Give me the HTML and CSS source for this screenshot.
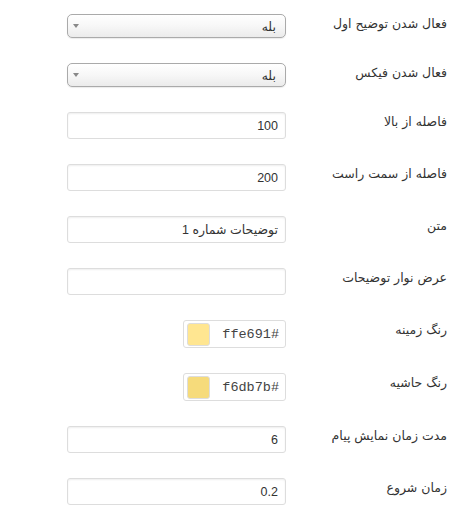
FILE: index.html
```html
<!DOCTYPE html>
<html lang="fa" dir="rtl">
<head>
    <meta charset="UTF-8">
    <meta name="viewport" content="width=device-width, initial-scale=1.0">
    <title>تنظیمات</title>
    <link rel="stylesheet" href="styles.css">
</head>
<body>
    <div class="form-table">
        <div class="row row-select">
            <label class="label">فعال شدن توضیح اول</label>
            <div class="select"><span>بله</span><i class="arrow"></i></div>
        </div>
        <div class="row row-select">
            <label class="label">فعال شدن فیکس</label>
            <div class="select"><span>بله</span><i class="arrow"></i></div>
        </div>
        <div class="row">
            <label class="label">فاصله از بالا</label>
            <input type="text" class="field" value="100">
        </div>
        <div class="row">
            <label class="label">فاصله از سمت راست</label>
            <input type="text" class="field" value="200">
        </div>
        <div class="row">
            <label class="label">متن</label>
            <input type="text" class="field" value="توضیحات شماره 1">
        </div>
        <div class="row">
            <label class="label">عرض نوار توضیحات</label>
            <input type="text" class="field" value="">
        </div>
        <div class="row row-color">
            <label class="label">رنگ زمینه</label>
            <div class="color">
                <span class="hex">#ffe691</span>
                <span class="swatch swatch-bg"></span>
            </div>
        </div>
        <div class="row row-color">
            <label class="label">رنگ حاشیه</label>
            <div class="color">
                <span class="hex">#f6db7b</span>
                <span class="swatch swatch-border"></span>
            </div>
        </div>
        <div class="row">
            <label class="label">مدت زمان نمایش پیام</label>
            <input type="text" class="field" value="6">
        </div>
        <div class="row">
            <label class="label">زمان شروع</label>
            <input type="text" class="field" value="0.2">
        </div>
    </div>
</body>
</html>
```

FILE: styles.css
```css
body { margin: 0; background: #fff; color: #222; font-family: "Liberation Sans", "DejaVu Sans", sans-serif; font-size: 13px; }
.form-table { padding-right: 6px; }
.row { display: grid; grid-template-columns: 150px 219px; column-gap: 11px; align-items: start; padding: 14px 0 11px; }
.label { padding-top: 1px; font-family: "DejaVu Sans", sans-serif; font-size: 12.5px; line-height: 18px; color: #333; }

.select { position: relative; box-sizing: border-box; height: 24px; border: 1px solid #aaa; border-radius: 5px; background: linear-gradient(#fff 0%, #f7f7f7 50%, #ebebeb 100%); box-shadow: 0 1px 1px rgba(0,0,0,.08); padding: 1px 9px 0; line-height: 22px; font-family: "DejaVu Sans", sans-serif; font-size: 12.5px; color: #333; }
.arrow { position: absolute; left: 5px; top: 9px; width: 0; height: 0; border-left: 3px solid transparent; border-right: 3px solid transparent; border-top: 4px solid #888; }

.field { box-sizing: border-box; width: 219px; height: 27px; margin: 0; padding: 0 7px; border: 1px solid #ddd; border-radius: 3px; box-shadow: inset 0 1px 2px rgba(0,0,0,.07); background: #fff; color: #333; font-family: "Liberation Sans", "DejaVu Sans", sans-serif; font-size: 12.5px; text-align: right; direction: rtl; outline: none; }

.row-color .color { justify-self: start; }
.color { box-sizing: border-box; width: 103px; height: 28px; display: flex; align-items: center; justify-content: space-between; padding: 0 6px 0 3px; border: 1px solid #ddd; border-radius: 3px; background: #fff; }
.hex { font-family: "Liberation Mono", "DejaVu Sans Mono", monospace; font-size: 13.5px; color: #444; }
.swatch { width: 21px; height: 21px; border: 1px solid #ddd; border-radius: 3px; }
.swatch-bg { background: #ffe691; }
.swatch-border { background: #f6db7b; }
```
